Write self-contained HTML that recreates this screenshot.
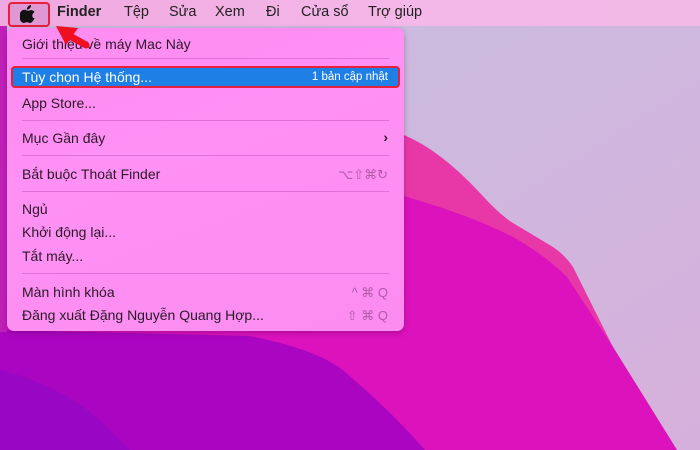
<!DOCTYPE html>
<html><head><meta charset="utf-8"><style>
*{margin:0;padding:0;box-sizing:border-box}
body{width:700px;height:450px;overflow:hidden;position:relative;font-family:"Liberation Sans","DejaVu Sans",sans-serif;background:#c9c2df}
#bg{position:absolute;left:0;top:0}
.bar{position:absolute;left:0;top:0;width:700px;height:26px;background:linear-gradient(90deg,#f0a8e0,#f4b8e8 60%,#f2b8e6);}
.bar span{position:absolute;top:4px;font-size:14.5px;color:#222}
.menu{position:absolute;left:7px;top:28px;width:397px;height:303px;border-radius:7px;background:linear-gradient(160deg,#ff8cf2,#ff90f4 40%,#fb8cf0);box-shadow:0 2px 6px rgba(80,0,80,.35)}
.it{position:absolute;left:15px;font-size:14px;color:#2a1a2a;white-space:nowrap}
.sc{position:absolute;right:16px;font-size:13px;color:#b05aa8;white-space:nowrap}
.sep{position:absolute;left:15px;right:15px;height:1px;background:#e070d8}
.hl{position:absolute;left:4px;right:4px;top:38px;height:22px;background:#1e7fe6;border:2px solid #e8203c;border-radius:4px}
</style></head><body>
<svg id="bg" width="700" height="450">
<defs><linearGradient id="lv" x1="0" y1="0" x2="1" y2="1"><stop offset="0" stop-color="#c6c0e0"/><stop offset="1" stop-color="#d6b0dc"/></linearGradient></defs>
<rect width="700" height="450" fill="url(#lv)"/>
<path d="M360 120 L404 135 Q440 150 480 193 Q500 215 513 223 L553 247 Q565 255 573 267 L613 347 L677 450 L0 450 L0 120 Z" fill="#e838a8"/>
<path d="M360 180 L407 197 Q470 215 513 237 Q545 255 567 277 L613 347 L677 450 L0 450 L0 180 Z" fill="#dc12bc"/>
<path d="M0 330 L250 336 Q320 350 345 372 Q390 410 425 450 L0 450 Z" fill="#aa06c2"/>
<path d="M0 370 Q60 385 100 420 L130 450 L0 450 Z" fill="#9008c4" opacity=".7"/>
<rect x="0" y="26" width="7" height="306" fill="#c020b8"/>
</svg>
<div class="bar">
<div style="position:absolute;left:8px;top:2px;width:42px;height:25px;border:2px solid #e8203c;border-radius:4px;background:#e098d4"></div>
<svg style="position:absolute;left:20px;top:5px" width="16" height="18" viewBox="0 0 16 18"><path d="M11 0c.1 1.3-.4 2.5-1.2 3.3-.8.9-1.9 1.4-2.9 1.3-.1-1.2.5-2.4 1.2-3.2C8.9.6 10.1 0 11 0zM14.6 13c-.4 1-.6 1.4-1.2 2.3-.8 1.200-1.9 2.7-3.3 2.7-1.2 0-1.6-.8-3.2-.8-1.7 0-2.1.8-3.3.8C2.2 18 1.1 16.7.3 15.4-1.9 12-.6 6.6 2.8 5.1c1.2-.5 2.3-.4 3.4.1.8.3 1.4.5 2 .5.6 0 1.4-.5 2.5-.6 1.6-.1 3 .6 3.900 1.9-3.4 1.9-2.8 6.7 0 6z" fill="#111"/></svg>
<span style="left:57px;font-weight:bold">Finder</span>
<span style="left:124px">Tệp</span>
<span style="left:169px">Sửa</span>
<span style="left:215px">Xem</span>
<span style="left:266px">Đi</span>
<span style="left:301px">Cửa sổ</span>
<span style="left:368px">Trợ giúp</span>
</div>
<div class="menu">
<div class="it" style="top:8px">Giới thiệu về máy Mac Này</div>
<div class="sep" style="top:30px"></div>
<div class="hl"></div>
<div class="it" style="top:41px;color:#fff">Tùy chọn Hệ thống...</div>
<div class="sc" style="top:43px;color:#fff;font-size:11.5px">1 bản cập nhật</div>
<div class="it" style="top:67px">App Store...</div>
<div class="sep" style="top:92px"></div>
<div class="it" style="top:102px">Mục Gần đây</div>
<div class="sc" style="top:101px;color:#2a1a2a;font-weight:bold;font-size:14px">›</div>
<div class="sep" style="top:127px"></div>
<div class="it" style="top:138px">Bắt buộc Thoát Finder</div>
<div class="sc" style="top:139px">⌥⇧⌘↻</div>
<div class="sep" style="top:163px"></div>
<div class="it" style="top:173px">Ngủ</div>
<div class="it" style="top:196px">Khởi động lại...</div>
<div class="it" style="top:220px">Tắt máy...</div>
<div class="sep" style="top:245px"></div>
<div class="it" style="top:256px">Màn hình khóa</div>
<div class="sc" style="top:257px">^ ⌘ Q</div>
<div class="it" style="top:279px">Đăng xuất Đặng Nguyễn Quang Hợp...</div>
<div class="sc" style="top:280px">⇧ ⌘ Q</div>
</div>
<svg style="position:absolute;left:0;top:0" width="120" height="60">
<line x1="86" y1="45" x2="68" y2="35" stroke="#ee1020" stroke-width="7" stroke-linecap="round"/>
<polygon points="56,26 78,28 66,45" fill="#ee1020"/>
</svg>
</body></html>
